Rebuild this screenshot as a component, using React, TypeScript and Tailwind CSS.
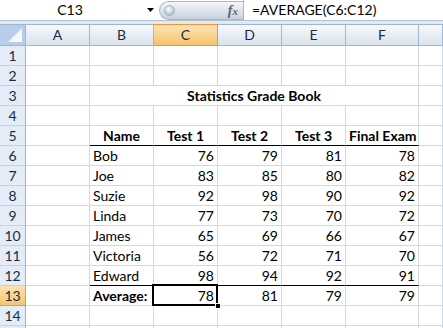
import React from "react";

const cols = ["A", "B", "C", "D", "E", "F", ""];

const students: [string, number, number, number, number][] = [
  ["Bob", 76, 79, 81, 78],
  ["Joe", 83, 85, 80, 82],
  ["Suzie", 92, 98, 90, 92],
  ["Linda", 77, 73, 70, 72],
  ["James", 65, 69, 66, 67],
  ["Victoria", 56, 72, 71, 70],
  ["Edward", 98, 94, 92, 91],
];

const cell =
  "h-[20px] border-r border-b border-[#d0d7e5] px-[3px] text-[14px] leading-[19px] text-black whitespace-nowrap overflow-visible";

const RowHead: React.FC<{ n?: number; active?: boolean }> = ({ n, active }) => (
  <div
    className={`h-[20px] border-r border-b text-center text-[14px] leading-[19px] ${
      active
        ? "bg-gradient-to-b from-[#fbe2b0] to-[#f5c56e] border-[#f29536] text-[#1b2b44]"
        : "bg-[#e4ecf7] border-r-[#9eb6ce] border-b-[#c3d0e1] text-[#1b2b44]"
    }`}
  >
    {n}
  </div>
);

const Empty: React.FC<{ count: number }> = ({ count }) => (
  <>
    {Array.from({ length: count }).map((_, i) => (
      <div key={i} className={cell}></div>
    ))}
  </>
);

export default function App() {
  return (
    <div
      className="w-[443px] h-[328px] overflow-hidden bg-white select-none"
      style={{ fontFamily: "Lato, 'Liberation Sans', sans-serif" }}
    >
      {/* formula bar */}
      <div className="h-[21px] flex items-stretch bg-white border-b border-[#b3c0d0]">
        <div className="w-[140px] text-center text-[14px] leading-[20px] text-black">
          C13
        </div>
        <div className="w-[19px] flex items-center pl-[7px]">
          <svg width="7" height="4" viewBox="0 0 7 4">
            <polygon points="0,0 7,0 3.5,4" fill="#000" />
          </svg>
        </div>
        <div className="w-[84px] mt-px flex items-center justify-between rounded-l-full border border-r-0 border-[#a9b7c8] bg-gradient-to-b from-[#f3f6f9] to-[#c8d2de] pl-[4px] pr-[5px]">
          <div className="w-[11px] h-[11px] rounded-full border border-[#a5b1c0] bg-[radial-gradient(circle_at_40%_35%,#ffffff,#c4ccd6_60%,#8d99a8)]"></div>
          <span
            className="text-[14px] leading-none italic text-[#59677a] font-bold"
            style={{ fontFamily: "'Liberation Serif', serif" }}
          >
            f<span className="text-[11px]">x</span>
          </span>
        </div>
        <div className="flex-1 border-l border-[#a9b7c8] pl-[8px] text-[14px] leading-[20px] text-black">
          =AVERAGE(C6:C12)
        </div>
      </div>
      <div className="h-[3px] bg-[#e3e9f1]"></div>

      {/* sheet */}
      <div className="grid grid-cols-[26px_64px_64px_64px_64px_64px_73px_1fr]">
        {/* header row */}
        <div className="h-[22px] border-t border-b border-r border-[#9eb6ce] bg-[#b9cde9] relative overflow-hidden">
          <svg className="absolute right-[3px] bottom-[3px]" width="14" height="14" viewBox="0 0 14 14">
            <defs>
              <linearGradient id="tri" x1="0" y1="0" x2="1" y2="1">
                <stop offset="0" stopColor="#dfe8f5" />
                <stop offset="1" stopColor="#ffffff" />
              </linearGradient>
            </defs>
            <polygon points="14,0 14,14 0,14" fill="url(#tri)" />
          </svg>
        </div>
        {cols.map((c, i) => (
          <div
            key={i}
            className={`h-[22px] border-t border-b border-r text-center text-[14px] leading-[20px] text-[#1b2b44] ${
              c === "C"
                ? "bg-gradient-to-b from-[#fbe3b4] to-[#f5c46c] border-[#f29536]"
                : "bg-gradient-to-b from-[#f7f9fc] to-[#dbe3ee] border-[#9eb6ce]"
            }`}
          >
            {c}
          </div>
        ))}

        {/* rows 1-2 */}
        <RowHead n={1} />
        <Empty count={7} />
        <RowHead n={2} />
        <Empty count={7} />

        {/* row 3 title */}
        <RowHead n={3} />
        <div className={cell}></div>
        <div className={`${cell} col-span-5 text-center font-bold`}>
          Statistics Grade Book
        </div>
        <div className={cell}></div>

        <RowHead n={4} />
        <Empty count={7} />

        {/* row 5 headers */}
        <RowHead n={5} />
        <div className={cell}></div>
        {["Name", "Test 1", "Test 2", "Test 3", "Final Exam"].map((h) => (
          <div
            key={h}
            className={`${cell} border-b-black text-center font-bold`}
          >
            {h}
          </div>
        ))}
        <div className={cell}></div>

        {/* data */}
        {students.map((s, r) => {
          const last = r === students.length - 1;
          return (
            <React.Fragment key={s[0]}>
              <RowHead n={6 + r} />
              <div className={cell}></div>
              <div className={`${cell} ${last ? "border-b-black" : ""}`}>
                {s[0]}
              </div>
              {s.slice(1).map((v, j) => (
                <div
                  key={j}
                  className={`${cell} text-right ${last ? "border-b-black" : ""}`}
                >
                  {v}
                </div>
              ))}
              <div className={cell}></div>
            </React.Fragment>
          );
        })}

        {/* average row */}
        <RowHead n={13} active />
        <div className={cell}></div>
        <div className={`${cell} font-bold`}>Average:</div>
        <div className={`${cell} text-right relative`}>
          78
          <div className="absolute left-[-2px] top-[-2px] w-[66px] h-[22px] border-2 border-black pointer-events-none"></div>
          <div className="absolute right-[-4px] bottom-[-4px] w-[6px] h-[6px] bg-black border border-white"></div>
        </div>
        <div className={`${cell} text-right`}>81</div>
        <div className={`${cell} text-right`}>79</div>
        <div className={`${cell} text-right`}>79</div>
        <div className={cell}></div>

        <RowHead n={14} />
        <Empty count={7} />
        <RowHead />
        <Empty count={7} />
      </div>
    </div>
  );
}
